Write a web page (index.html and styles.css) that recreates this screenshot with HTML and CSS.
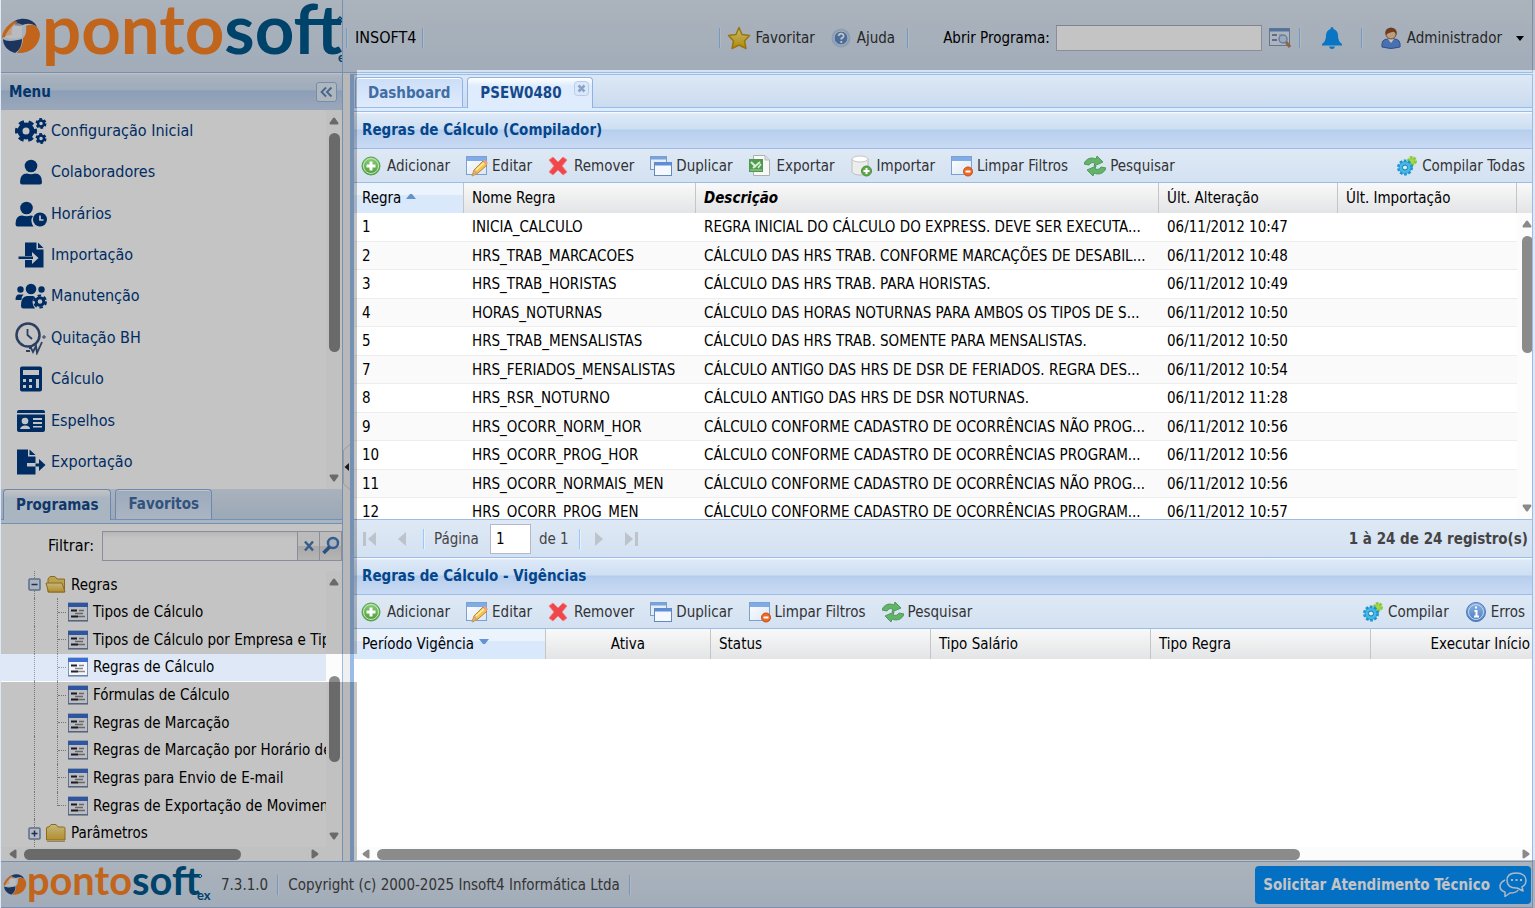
FILE: index.html
```html
<!DOCTYPE html>
<html lang="pt-BR">
<head>
<meta charset="utf-8">
<title>Pontosoft - Regras de Cálculo</title>
<link rel="stylesheet" href="styles.css">
</head>
<body>
<svg class="defs" aria-hidden="true">
  <defs>
    <linearGradient id="gGold" x1="0" y1="0" x2="0" y2="1"><stop offset="0" stop-color="#fff3a0"/><stop offset="1" stop-color="#e9b400"/></linearGradient>
    <linearGradient id="gFolder" x1="0" y1="0" x2="0" y2="1"><stop offset="0" stop-color="#fff0a0"/><stop offset="1" stop-color="#e8b93c"/></linearGradient>
    <linearGradient id="gBlue" x1="0" y1="0" x2="0" y2="1"><stop offset="0" stop-color="#8fb4e4"/><stop offset="1" stop-color="#4a7cc0"/></linearGradient>
    <linearGradient id="gGreen" x1="0" y1="0" x2="0" y2="1"><stop offset="0" stop-color="#8ccf7c"/><stop offset="1" stop-color="#4a9b3a"/></linearGradient>
    <linearGradient id="gPaper" x1="0" y1="0" x2="1" y2="1"><stop offset="0" stop-color="#fff"/><stop offset="1" stop-color="#dbe6f4"/></linearGradient>
    <symbol id="mark" viewBox="0 0 40 38">
      <path d="M9 8C16-1 32 0 36 10C31 6 25 6 20 9Z" fill="#26457a"/>
      <path d="M25 9C33 5 39 11 39 18C38 29 29 37 16 36C21 30 22 26 22 21C24 20 26 15 25 9Z" fill="#fa8424"/>
      <path d="M2 22C5 25 15 24 21 22C21 28 19 33 14 36C7 34 2 29 2 22Z" fill="#26457a"/>
      <path d="M12 5C6 8 1 15 1 21C5 19 8 18 11 18C10 14 10 9 17 5C15 4 14 4 12 5Z" fill="#fa8424"/>
      <path d="M13 7C9 11 5 16 4 20C9 22 16 22 21 20C22 15 20 10 22 8C18 6 15 6 13 7Z" fill="#fff" opacity=".6"/>
    </symbol>
    <symbol id="add" viewBox="0 0 22 22"><circle cx="10" cy="11" r="9" fill="url(#gGreen)" stroke="#57a04a"/><circle cx="10" cy="11" r="7.500" fill="none" stroke="#c5e8bd"/><path d="M10 6.500V15.500M5.500 11H14.500" stroke="#fff" stroke-width="3"/></symbol>
    <symbol id="win" viewBox="0 0 22 22"><rect x=".5" y="1.500" width="20" height="18" fill="url(#gPaper)" stroke="#7ba0d2"/><rect x="1" y="2" width="19" height="4" fill="#7fabe6"/></symbol>
    <symbol id="edit" viewBox="0 0 22 22"><use href="#win"/><path d="M6 21L8 15L17 6L21 10L12 18Z" fill="#f6c455" stroke="#b98222"/><path d="M17 6L19 5L22 8L20.500 10Z" fill="#f0a090"/><path d="M6 21L8 15L12 18Z" fill="#d8a878"/><path d="M10 15L18 8" stroke="#fff0b0" stroke-width="1.500"/></symbol>
    <symbol id="del" viewBox="0 0 22 22"><path d="M5 2L10 7L15 2L19 5L14 11L19 17L15 20L10 15L5 20L1 17L6 11L1 5Z" fill="#f0474a" stroke="#f58084" stroke-linejoin="round"/></symbol>
    <symbol id="dup" viewBox="0 0 22 22"><rect x=".5" y="1.500" width="16" height="13" fill="#e4edf8" stroke="#7b9cc9"/><path d="M1 3H16" stroke="#79a3dc" stroke-width="3"/><rect x="4.500" y="7.500" width="17" height="13" fill="#f5f9fe" stroke="#6589bd"/><path d="M5 9H21" stroke="#5c8fd8" stroke-width="3"/></symbol>
    <symbol id="xls" viewBox="0 0 22 22"><path d="M4.500 .5H16L20.500 5V20.500H4.500Z" fill="#f8f8f8" stroke="#a9b2ac"/><path d="M16 1V5H20" fill="#ddd" stroke="#bbb"/><rect x="0" y="4" width="14" height="13" fill="#4f9a50"/><path d="M2 7L7 12M11 7L4 13" stroke="#d6f0d0" stroke-width="2"/><path d="M9 13L12 9" stroke="#d6f0d0" stroke-width="1.500"/><path d="M1 15H13" stroke="#a7d49f"/></symbol>
    <symbol id="imp" viewBox="0 0 22 22"><path d="M1 4V17C2 21 16 21 17 17V4Z" fill="#ededed" stroke="#bdbdbd"/><ellipse cx="9" cy="4" rx="8" ry="3" fill="#fff" stroke="#c5c5c5"/><circle cx="15.500" cy="16" r="5" fill="#5eaa4b" stroke="#4b8c3b"/><path d="M15.500 13V19M12.500 16H18.500" stroke="#fff" stroke-width="2"/></symbol>
    <symbol id="clr" viewBox="0 0 22 22"><use href="#win"/><circle cx="17" cy="16.500" r="4.500" fill="#ee6a24" stroke="#c84c12"/><path d="M14.500 16.500H19.500" stroke="#fff" stroke-width="2"/></symbol>
    <symbol id="ref" viewBox="0 0 22 22"><path d="M0 9C2 3 8 2 12 4L13 1L19 7L10 11L11 8C8 7 6 8 5 10Z" fill="#63b36a" stroke="#4f9a58" stroke-linejoin="round"/><path d="M22 13C20 19 14 20 10 18L9 21L3 15L12 11L11 14C14 15 16 14 17 12Z" fill="#63b36a" stroke="#4f9a58" stroke-linejoin="round"/></symbol>
    <symbol id="gear2" viewBox="0 0 22 22"><circle cx="16" cy="6" r="3.500" fill="#a2d94e" stroke="#8cc93c" stroke-width="3" stroke-dasharray="2.500 1"/><circle cx="9" cy="12.500" r="6.500" fill="#2aa5de" stroke="#1f93cc" stroke-width="3" stroke-dasharray="2.600 1.500"/><circle cx="9" cy="12.500" r="5.500" fill="#45b8ea"/><circle cx="9" cy="12.500" r="2.500" fill="#d8edf8" stroke="#1678ae"/></symbol>
    <symbol id="info" viewBox="0 0 22 22"><circle cx="11" cy="11" r="9.500" fill="url(#gBlue)" stroke="#4c78b6"/><circle cx="11" cy="11" r="7.500" fill="none" stroke="#c0d6f2"/><path d="M11 5.500V7.500M9.500 10H11.500V15.500M9 15.500H14" stroke="#fff" stroke-width="2" fill="none"/></symbol>
    <symbol id="form" viewBox="0 0 20 20"><rect x=".5" y="1" width="19" height="17.500" fill="#f4f6fa" stroke="#7d94b8"/><rect x="0" y="1" width="20" height="4" fill="#3d6fd0"/><path d="M3 8.500H9M3 14.500H10" stroke="#223" stroke-width="2"/><path d="M11 8.500H16M7 11.500H15M10 14.500H17" stroke="#888" stroke-width="1.500"/><path d="M0 19H20" stroke="#5f7290"/></symbol>
    <symbol id="folder" viewBox="0 0 22 20"><path d="M1.500 17V5Q1.500 4 3 4H4L6 1.500H11L13 4H18.500Q20 4 20 5.500V17Z" fill="url(#gFolder)" stroke="#b98b22"/><path d="M2 18.500H20" stroke="#96783a" opacity=".6"/></symbol>
    <symbol id="folderopen" viewBox="0 0 22 20"><path d="M3 17V4L5 1.500H10L12 4H19.500V17Z" fill="#f3d36e" stroke="#b98b22"/><path d="M1 8H17L20 17H3.500Z" fill="url(#gFolder)" stroke="#b98b22"/></symbol>
    <symbol id="plus" viewBox="0 0 13 13"><rect x="1" y="1" width="11" height="11" rx="1" fill="#eef3fa" stroke="#7790b6" stroke-width="1.500"/><path d="M3.500 6.500H9.500M6.500 3.500V9.500" stroke="#223f70" stroke-width="1.500"/></symbol>
    <symbol id="minus" viewBox="0 0 13 13"><rect x="1" y="1" width="11" height="11" rx="1" fill="#dfe9f5" stroke="#7790b6" stroke-width="1.500"/><path d="M3.500 6.500H9.500" stroke="#223f70" stroke-width="1.500"/></symbol>
    <symbol id="up" viewBox="0 0 10 8"><path d="M4 1Q5 0 6 1L9.500 6Q9.500 7.500 8.500 7.500H1.500Q.5 7.500 .5 6Z" fill="#8a8a8a"/></symbol>
    <symbol id="down" viewBox="0 0 10 8"><path d="M4 7Q5 8 6 7L9.500 2Q9.500 .5 8.500 .5H1.500Q.5 .5 .5 2Z" fill="#8a8a8a"/></symbol>
    <symbol id="left" viewBox="0 0 8 10"><path d="M1 4Q0 5 1 6L6 9.500Q7.500 9.500 7.500 8.500V1.500Q7.500 .5 6 .5Z" fill="#8a8a8a"/></symbol>
    <symbol id="right" viewBox="0 0 8 10"><path d="M7 4Q8 5 7 6L2 9.500Q.5 9.500 .5 8.500V1.500Q.5 .5 2 .5Z" fill="#8a8a8a"/></symbol>
  </defs>
</svg>

<div class="app">
  <header class="top">
    <div class="brand">
      <svg class="brand-logo" viewBox="0 0 341 71" role="img" aria-label="pontosoft">
        <use href="#mark" x="0" y="17" width="40" height="38"/>
        <text x="41" y="54" class="logo-text"><tspan class="logo-a">ponto</tspan><tspan class="logo-b">soft</tspan></text>
        <path d="M339 17L342 20L339 23L336 20Z" fill="none" stroke="#00588b" stroke-width="1.500"/>
        <text x="337" y="62" class="logo-ex">ex</text>
      </svg>
    </div>
    <div class="topbar">
      <i class="sep"></i><span class="company">INSOFT4</span><i class="sep"></i>
      <div class="topright">
        <i class="sep"></i>
        <button class="tbtn fav"><svg width="24" height="24" viewBox="0 0 24 24"><path d="M12 1.500L15 8.500L22.500 9.500L17.500 15L19 22.500L12 19L5 22.500L6.500 15L1.500 9.500L9 8.500Z" fill="url(#gGold)" stroke="#c69a10" stroke-width="1.500" stroke-linejoin="round"/></svg>Favoritar</button>
        <button class="tbtn help"><svg width="20" height="20" viewBox="0 0 20 20"><circle cx="10" cy="10" r="9.500" fill="#b8cdea"/><circle cx="10" cy="10" r="7" fill="#6090cc" stroke="#e3edf9"/><path d="M7.500 8Q8 5.500 10.300 5.600Q13 6 12.500 8.300Q12 9.500 10.300 10.500V11.500M10.300 13V15" fill="none" stroke="#fff" stroke-width="1.800"/></svg>Ajuda</button>
        <i class="sep"></i>
        <label class="open-label" for="prog">Abrir Programa:</label>
        <input class="open-input" id="prog" type="text">
        <button class="tbtn find" aria-label="Buscar programa"><svg width="22" height="22" viewBox="0 0 22 22"><rect x=".5" y="1.500" width="20" height="17" fill="#e3ebf5" stroke="#8099bd"/><path d="M1 3H20" stroke="#6f95cc" stroke-width="3"/><path d="M3 8H8M3 13H8" stroke="#6f8fbd" stroke-width="2"/><path d="M10 8H13M10 13H12" stroke="#8fa3c0"/><circle cx="14" cy="12" r="4" fill="#c9dcf4" stroke="#8aa5ca" stroke-width="1.500"/><path d="M17 15L21 20" stroke="#b98556" stroke-width="3"/></svg></button>
        <i class="sep"></i>
        <button class="tbtn bell" aria-label="Notificações"><svg width="22" height="22" viewBox="0 0 22 22"><path d="M11 0Q12.500 0 12.500 2Q17 3.500 17 9Q17 14 21 17V18.500H1V17Q5 14 5 9Q5 3.500 9.500 2Q9.500 0 11 0ZM8 19.500H14Q13.500 22 11 22Q8.500 22 8 19.500Z" fill="#0c99ff"/></svg></button>
        <i class="sep"></i>
        <button class="tbtn user"><svg width="20" height="22" viewBox="0 0 20 22"><path d="M1 20Q0 12 7 12H13Q20 12 19 20Q10 23 1 20Z" fill="#5f94e6" stroke="#3a68b8"/><path d="M7 12L10 16L13 12Z" fill="#fff"/><circle cx="10" cy="7" r="5" fill="#f5cba4" stroke="#a06a40"/><path d="M4.500 8Q3 1 10 .5Q17 1 15.500 8Q14 4 11 5Q7 6 4.500 8Z" fill="#8f5028"/></svg>Administrador<span class="caret"></span></button>
      </div>
    </div>
  </header>

  <div class="middle">
    <aside class="side">
      <div class="phead"><h2>Menu</h2><button class="collapse" aria-label="Recolher menu"><svg width="20" height="20" viewBox="0 0 20 20"><path d="M9.500 5L4.500 10L9.500 15M15.500 5L10.500 10L15.500 15" fill="none" stroke="#5d83b5" stroke-width="2"/></svg></button></div>
      <div class="menu">
        <nav class="menu-list">
          <a href="#"><svg viewBox="0 0 32 26"><g fill="none" stroke="#003a82"><circle cx="11" cy="13" r="6" stroke-width="5"/><circle cx="11" cy="13" r="9" stroke-width="4" stroke-dasharray="5 4.425" stroke-dashoffset="2.500"/><circle cx="26" cy="5.500" r="3" stroke-width="2.500"/><circle cx="26" cy="5.500" r="4.500" stroke-width="2" stroke-dasharray="2.700 2.012"/><circle cx="26" cy="20.500" r="3" stroke-width="2.500"/><circle cx="26" cy="20.500" r="4.500" stroke-width="2" stroke-dasharray="2.700 2.012"/></g></svg>Configuração Inicial</a>
          <a href="#"><svg viewBox="0 0 32 26"><circle cx="16" cy="7" r="6.300"/><path d="M5 23Q5 14.500 12 14.500Q16 16 20 14.500Q27 14.500 27 23Q27 25.500 25 25.500H7Q5 25.500 5 23Z"/></svg>Colaboradores</a>
          <a href="#"><svg viewBox="0 0 32 26"><circle cx="11.500" cy="7" r="6.300"/><path d="M.5 23Q.5 14.500 7 14.500Q11.500 16 16 14.500L18 15Q14.500 20 18.500 25.500H2.500Q.5 25.500 .5 23Z"/><circle cx="25" cy="18.500" r="7"/><path d="M25 14.500V19H28.500" fill="none" stroke="#fff" stroke-width="1.700"/></svg>Horários</a>
          <a href="#"><svg viewBox="0 0 32 26"><path d="M10 .5H21.500V7.500H28.500V25.500H10V18H17V22L23.500 16L17 10V14H10ZM23 .5L28.500 6H23Z"/><path d="M3.500 14.500H18V17H3.500Z"/></svg>Importação</a>
          <a href="#"><svg viewBox="0 0 32 26"><circle cx="5.500" cy="6.500" r="3.200"/><circle cx="16" cy="6" r="5.300"/><circle cx="26.500" cy="6.500" r="3.200"/><path d="M.5 17Q.5 11.500 4 11.500H8.500Q6 14 6.500 17ZM6 23Q6 13 12 13H18L20 14Q15 19 20 25.500H8Q6 25 6 23Z"/><g fill="none" stroke="#003a82"><circle cx="25" cy="18.500" r="3.800" stroke-width="3"/><circle cx="25" cy="18.500" r="6" stroke-width="2" stroke-dasharray="3.500 2.783"/></g></svg>Manutenção</a>
          <a href="#"><svg class="clock" viewBox="0 0 32 34"><g fill="none" stroke="#3a527f"><circle cx="13" cy="14" r="11.500" stroke-width="2.500"/><path d="M12.500 8V14L17 18" stroke-width="1.800"/><path d="M29 14V18M27 16H31" stroke-width="1"/><path d="M11 30H15M14 27H17M16 27L18 31L21 25L22 32L27 21" stroke-width="1.800"/></g></svg>Quitação BH</a>
          <a href="#"><svg viewBox="0 0 32 26"><path fill-rule="evenodd" d="M7 .5H25Q27 .5 27 2.500V23.500Q27 25.500 25 25.500H7Q5 25.500 5 23.500V2.500Q5 .5 7 .5ZM8 4V9H24V4ZM8 13V16H11V13ZM14 13V16H17V13ZM8 19V22H11V19ZM14 19V22H17V19ZM21 13V22H24V13Z"/></svg>Cálculo</a>
          <a href="#"><svg viewBox="0 0 32 26"><path d="M4 2H28Q30 2 30 4V5H2V4Q2 2 4 2ZM2 6.500H30V22Q30 24 28 24H4Q2 24 2 22Z"/><circle cx="10" cy="13" r="3.300" fill="#fff"/><path d="M5 21Q6 17.500 10 17.500Q15 17.500 15 21ZM18 10H27V12H18ZM18 14H27V16H18ZM18 18H27V19.500H18Z" fill="#fff"/></svg>Espelhos</a>
          <a href="#"><svg viewBox="0 0 32 26"><path d="M2 .5H13V7.500H20.500V14H12V17.500H20.500V25.500H2ZM14.500 .5L20.500 6H14.500Z"/><path d="M20.500 14.500H24V10L30.500 16L24 22V17.500H20.500Z"/></svg>Exportação</a>
        </nav>
        <div class="vscroll"><svg width="10" height="8"><use href="#up"/></svg><div class="thumb thumb-menu"></div><svg class="end" width="10" height="8"><use href="#down"/></svg></div>
      </div>
      <div class="tabs side-tabs"><button class="tab active">Programas</button><button class="tab">Favoritos</button></div>
      <div class="tabline"></div>
      <form class="filter">
        <label for="filtro">Filtrar:</label><input id="filtro" type="text"><button type="button" aria-label="Limpar"><svg width="12" height="12" viewBox="0 0 12 12"><path d="M2 1.500L10 10.500M10 1.500L2 10.500" stroke="#4a7ab5" stroke-width="2.500"/></svg></button><button type="button" aria-label="Procurar"><svg width="20" height="20" viewBox="0 0 20 20"><circle cx="12" cy="7" r="5" fill="#dce9f8" stroke="#4478bd" stroke-width="2.500"/><path d="M8.500 11L2.500 17" stroke="#3867a6" stroke-width="3.500"/></svg></button>
      </form>
      <div class="tree">
        <ul class="tree-list">
          <li class="node"><i class="root"></i><svg class="tog" width="13" height="13"><use href="#minus"/></svg><svg class="fold" width="22" height="20"><use href="#folderopen"/></svg>Regras</li>
          <li class="leaf"><i class="g1"></i><i class="g2"></i><svg><use href="#form"/></svg>Tipos de Cálculo</li>
          <li class="leaf"><i class="g1"></i><i class="g2"></i><svg><use href="#form"/></svg>Tipos de Cálculo por Empresa e Tipo</li>
          <li class="leaf selected"><i class="g1"></i><i class="g2"></i><svg><use href="#form"/></svg>Regras de Cálculo</li>
          <li class="leaf"><i class="g1"></i><i class="g2"></i><svg><use href="#form"/></svg>Fórmulas de Cálculo</li>
          <li class="leaf"><i class="g1"></i><i class="g2"></i><svg><use href="#form"/></svg>Regras de Marcação</li>
          <li class="leaf"><i class="g1"></i><i class="g2"></i><svg><use href="#form"/></svg>Regras de Marcação por Horário de</li>
          <li class="leaf"><i class="g1"></i><i class="g2"></i><svg><use href="#form"/></svg>Regras para Envio de E-mail</li>
          <li class="leaf last"><i class="g1"></i><i class="g2"></i><svg><use href="#form"/></svg>Regras de Exportação de Movimentos</li>
          <li class="node"><i class="root"></i><svg class="tog" width="13" height="13"><use href="#plus"/></svg><svg class="fold" width="22" height="20"><use href="#folder"/></svg>Parâmetros</li>
        </ul>
        <div class="vscroll"><svg width="10" height="8"><use href="#up"/></svg><i class="space-a"></i><div class="thumb thumb-tree"></div><i class="space-b"></i><svg width="10" height="8"><use href="#down"/></svg></div>
      </div>
      <div class="hscroll tree-h"><svg width="8" height="10"><use href="#left"/></svg><div class="thumb"></div><svg class="end" width="8" height="10"><use href="#right"/></svg></div>
    </aside>
    <div class="splitter"><button aria-label="Recolher"><svg width="7" height="46" viewBox="0 0 7 46"><path d="M7 .5L.5 6V40L7 45.500" fill="#eee" stroke="#ccc"/><path d="M6 19L1.500 23L6 27Z" fill="#222"/></svg></button></div>

    <main class="main">
      <div class="tabs main-tabs"><button class="tab">Dashboard</button><button class="tab active closable">PSEW0480<svg width="15" height="15" viewBox="0 0 15 15"><rect x=".5" y=".5" width="14" height="14" rx="3" fill="#dbe8f8" stroke="#b5cdeb"/><path d="M4.500 4.500L10.500 10.500M10.500 4.500L4.500 10.500" stroke="#88a4cb" stroke-width="2.500"/></svg></button></div>
      <div class="tabline"></div>
      <section class="panel rules">
        <div class="phead"><h2>Regras de Cálculo (Compilador)</h2></div>
        <div class="toolbar">
          <button><svg><use href="#add"/></svg>Adicionar</button><button><svg><use href="#edit"/></svg>Editar</button><button><svg><use href="#del"/></svg>Remover</button><button><svg><use href="#dup"/></svg>Duplicar</button><button class="wide"><svg><use href="#xls"/></svg>Exportar</button><button><svg><use href="#imp"/></svg>Importar</button><button><svg><use href="#clr"/></svg>Limpar Filtros</button><button><svg><use href="#ref"/></svg>Pesquisar</button><button class="push"><svg><use href="#gear2"/></svg>Compilar Todas</button>
        </div>
        <div class="gridwrap">
          <div class="tablebox">
          <table class="grid">
            <colgroup><col class="c109"><col class="c232"><col><col class="c179"><col class="c179"></colgroup>
            <thead><tr><th class="sorted">Regra<svg width="10" height="6" viewBox="0 0 10 6"><path d="M0 6L4 1H6L10 6Z" fill="#6593cf"/></svg></th><th>Nome Regra</th><th class="changed">Descrição</th><th>Últ. Alteração</th><th>Últ. Importação</th></tr></thead>
            <tbody>
              <tr><td>1</td><td>INICIA_CALCULO</td><td>REGRA INICIAL DO CÁLCULO DO EXPRESS. DEVE SER EXECUTA...</td><td>06/11/2012 10:47</td><td></td></tr>
              <tr><td>2</td><td>HRS_TRAB_MARCACOES</td><td>CÁLCULO DAS HRS TRAB. CONFORME MARCAÇÕES DE DESABIL...</td><td>06/11/2012 10:48</td><td></td></tr>
              <tr><td>3</td><td>HRS_TRAB_HORISTAS</td><td>CÁLCULO DAS HRS TRAB. PARA HORISTAS.</td><td>06/11/2012 10:49</td><td></td></tr>
              <tr><td>4</td><td>HORAS_NOTURNAS</td><td>CÁLCULO DAS HORAS NOTURNAS PARA AMBOS OS TIPOS DE S...</td><td>06/11/2012 10:50</td><td></td></tr>
              <tr><td>5</td><td>HRS_TRAB_MENSALISTAS</td><td>CÁLCULO DAS HRS TRAB. SOMENTE PARA MENSALISTAS.</td><td>06/11/2012 10:50</td><td></td></tr>
              <tr><td>7</td><td>HRS_FERIADOS_MENSALISTAS</td><td>CÁLCULO ANTIGO DAS HRS DE DSR DE FERIADOS. REGRA DES...</td><td>06/11/2012 10:54</td><td></td></tr>
              <tr><td>8</td><td>HRS_RSR_NOTURNO</td><td>CÁLCULO ANTIGO DAS HRS DE DSR NOTURNAS.</td><td>06/11/2012 11:28</td><td></td></tr>
              <tr><td>9</td><td>HRS_OCORR_NORM_HOR</td><td>CÁLCULO CONFORME CADASTRO DE OCORRÊNCIAS NÃO PROG...</td><td>06/11/2012 10:56</td><td></td></tr>
              <tr><td>10</td><td>HRS_OCORR_PROG_HOR</td><td>CÁLCULO CONFORME CADASTRO DE OCORRÊNCIAS PROGRAM...</td><td>06/11/2012 10:56</td><td></td></tr>
              <tr><td>11</td><td>HRS_OCORR_NORMAIS_MEN</td><td>CÁLCULO CONFORME CADASTRO DE OCORRÊNCIAS NÃO PROG...</td><td>06/11/2012 10:56</td><td></td></tr>
              <tr><td>12</td><td>HRS_OCORR_PROG_MEN</td><td>CÁLCULO CONFORME CADASTRO DE OCORRÊNCIAS PROGRAM...</td><td>06/11/2012 10:57</td><td></td></tr>
            </tbody>
          </table>
          </div>
          <div class="gutter"><div class="gutter-head"></div><div class="vscroll"><svg width="10" height="8"><use href="#up"/></svg><div class="thumb thumb-rules"></div><svg class="end" width="10" height="8"><use href="#down"/></svg></div></div>
        </div>
        <div class="pager">
          <button aria-label="Primeira"><svg width="14" height="16" viewBox="0 0 14 16"><path d="M1.500 1V15" stroke="#bcc3cb" stroke-width="3"/><path d="M13 1V15L5 8Z" fill="#bcc3cb"/></svg></button>
          <button aria-label="Anterior"><svg width="14" height="16" viewBox="0 0 14 16"><path d="M11 1V15L3 8Z" fill="#bcc3cb"/></svg></button>
          <i class="sep"></i><label for="pg">Página</label><input id="pg" type="text" value="1"><span>de 1</span><i class="sep"></i>
          <button aria-label="Próxima"><svg width="14" height="16" viewBox="0 0 14 16"><path d="M3 1V15L11 8Z" fill="#bcc3cb"/></svg></button>
          <button aria-label="Última"><svg width="14" height="16" viewBox="0 0 14 16"><path d="M12.500 1V15" stroke="#bcc3cb" stroke-width="3"/><path d="M1 1V15L9 8Z" fill="#bcc3cb"/></svg></button>
          <b class="push">1 à 24 de 24 registro(s)</b>
        </div>
      </section>
      <section class="panel terms">
        <div class="phead"><h2>Regras de Cálculo - Vigências</h2></div>
        <div class="toolbar">
          <button><svg><use href="#add"/></svg>Adicionar</button><button><svg><use href="#edit"/></svg>Editar</button><button><svg><use href="#del"/></svg>Remover</button><button><svg><use href="#dup"/></svg>Duplicar</button><button><svg><use href="#clr"/></svg>Limpar Filtros</button><button><svg><use href="#ref"/></svg>Pesquisar</button><button class="push"><svg><use href="#gear2"/></svg>Compilar</button><button><svg><use href="#info"/></svg>Erros</button>
        </div>
        <div class="tablebox">
          <table class="grid">
            <colgroup><col class="c191"><col class="c165"><col class="c220"><col class="c220"><col class="c220"><col></colgroup>
            <thead><tr><th class="sorted">Período Vigência<svg width="10" height="6" viewBox="0 0 10 6"><path d="M0 0L4 5H6L10 0Z" fill="#6593cf"/></svg></th><th class="center">Ativa</th><th>Status</th><th>Tipo Salário</th><th>Tipo Regra</th><th class="right">Executar Início</th></tr></thead>
          </table>
        </div>
        <div class="hscroll terms-h"><svg width="8" height="10"><use href="#left"/></svg><div class="thumb"></div><svg class="end" width="8" height="10"><use href="#right"/></svg></div>
      </section>
    </main>
  </div>

  <footer class="foot">
    <svg class="foot-logo" viewBox="0 0 212 45" role="img" aria-label="pontosoft ex">
      <use href="#mark" x="2" y="11" width="24" height="23"/>
      <text x="26" y="33" class="logo-text small"><tspan class="logo-a">ponto</tspan><tspan class="logo-b">soft</tspan></text>
      <path d="M200 12L202 14L200 16L198 14Z" fill="none" stroke="#00588b"/>
      <text x="197" y="38" class="logo-ex">ex</text>
    </svg>
    <span class="version">7.3.1.0</span><i class="sep"></i><span>Copyright (c) 2000-2025 Insoft4 Informática Ltda</span><i class="sep"></i>
    <button class="support">Solicitar Atendimento Técnico<svg width="28" height="26" viewBox="0 0 28 26"><g fill="none" stroke="#e6f2ff" stroke-width="1.500" stroke-linejoin="round"><path d="M17 1C24 1 27 4.500 27 8.500C27 12 25 14 23 15L24 19L18 16C11 16.500 8 13 8 8.500C8 4 11 1 17 1Z"/><path d="M6 8C2 10 1 12 1 14.500C1 17 3 19 6 20V24.500L11 21C15 21 18 20 19 18"/></g><path d="M12 8H14M16.500 8H18.500M21 8H23" stroke="#e6f2ff" stroke-width="1.800"/></svg></button>
  </footer>
  <div class="shade" aria-hidden="true"><i class="shade-top"></i><i class="shade-menu"></i><i class="shade-tree"></i><i class="shade-foot"></i></div>
</div>
</body>
</html>
```

FILE: styles.css
```css
* { box-sizing: border-box; }
body { margin: 0; background: #dfe8f6; color: #000; font: 15px/20px "DejaVu Sans Condensed", "DejaVu Sans", "Noto Sans", sans-serif; }
button, input { font: inherit; color: inherit; }
button { border: 0; padding: 0; background: none; }
svg { display: block; flex: none; }
h2 { margin: 0; font-size: 15px; line-height: 20px; color: #04468c; }
.defs { position: absolute; width: 0; height: 0; }
.app { position: relative; display: flex; flex-direction: column; height: 100vh; padding: 0 2px 0 1px; overflow: hidden; }
.sep { flex: none; width: 2px; height: 20px; border-left: 1px solid #98c8ff; border-right: 1px solid #e8f0fa; }
.push { margin-left: auto; }

/* top bar */
.top { display: flex; flex: none; height: 73px; background: linear-gradient(#dfe9f5, #d3e1f1); border-bottom: 1px solid #99bce8; border-right: 1px solid #99bce8; }
.brand { flex: none; width: 342px; border-right: 1px solid #99bce8; overflow: hidden; }
.brand-logo { width: 341px; height: 71px; }
.logo-text { font: 700 69px Lato, sans-serif; }
.logo-text.small { font-size: 40px; }
.logo-a { fill: #fa8424; }
.logo-b { fill: #00588b; }
.logo-ex { font: 700 13px Lato, sans-serif; fill: #00588b; }
.topbar { display: flex; flex: 1; align-items: center; padding: 4px 8px 0 3px; }
.company { margin: 0 6px 0 7px; font-size: 16px; }
.topright { display: flex; align-items: center; margin-left: auto; }
.tbtn { display: flex; align-items: center; gap: 6px; color: #333; }
.fav { gap: 4px; margin: 0 16px 0 6px; }
.help { margin-right: 12px; }
.open-label { margin: 0 6px 0 34px; }
.open-input { width: 206px; height: 26px; border: 1px solid #b5b8c8; border-top-color: #aaa8bb; background: #fff; padding: 0 4px; }
.find { margin: 0 8px 0 7px; }
.bell { margin: 0 18px 0 20px; }
.user { margin-left: 18px; }
.caret { margin-left: 8px; border: 4px solid transparent; border-top: 5px solid #000; border-bottom: 0; }

.middle { display: flex; flex: 1; min-height: 0; }
.phead { display: flex; flex: none; align-items: center; justify-content: space-between; height: 37px; padding: 0 6px 0 8px; border-bottom: 1px solid #99bce8; background: linear-gradient(#fff 0, #dde9f7 2px, #cedff3 17px, #b4cdee 18px, #b9d0ee 20px, #c9daf3 36px); }

/* left column */
.side { display: flex; flex: none; flex-direction: column; width: 342px; background: #fff; border-right: 1px solid #99bce8; }
.side > .phead { border-bottom: 0; padding-right: 5px; }
.collapse { border: 1px solid #99b8dd; border-radius: 3px; background: #e3edf8; }
.collapse svg { width: 19px; height: 18px; }
.menu { display: flex; flex: 377 1 0; min-height: 0; }
.menu-list { display: flex; flex: 1; flex-direction: column; padding: 0 0 6px 14px; }
.menu-list a { display: flex; flex: 1; align-items: center; gap: 4px; color: #003a82; font-size: 16px; text-decoration: none; }
.menu-list svg { width: 32px; height: 26px; fill: #003a82; }
.menu-list .clock { height: 34px; }
.vscroll { display: flex; flex: none; flex-direction: column; align-items: center; width: 16px; padding: 7px 0; background: #fcfcfc; }
.thumb { flex: none; border-radius: 6px; background: #8b8b8b; }
.vscroll .thumb { width: 11px; }
.end { margin-top: auto; }
.thumb-menu { height: 60%; margin-top: 8px; }
.thumb-tree { height: 33%; }
.thumb-rules { height: 40%; margin-top: 8px; }
.space-a { flex: 90; }
.space-b { flex: 70; }
.tabs { display: flex; flex: none; align-items: flex-end; gap: 4px; background: linear-gradient(#dde8f5, #cbdbef); border-bottom: 1px solid #99bce8; }
.tab { height: 30px; padding: 0 12px; border: 1px solid #8db2e3; border-bottom: 0; border-radius: 4px 4px 0 0; background: linear-gradient(#cbdef7, #dfebfc); box-shadow: inset 0 1px #fff; color: #416da3; font-weight: 700; }
.tab.active { margin-bottom: -1px; height: 31px; background: linear-gradient(#fff, #deecfd 8px); color: #15498b; }
.side-tabs { height: 31px; padding-left: 2px; }
.tabline { flex: none; height: 4px; background: #deecfd; border-bottom: 1px solid #99bce8; }
.filter { display: flex; flex: none; align-items: center; padding: 7px 0 10px 47px; }
.filter label { margin-right: 8px; font-size: 16px; }
.filter input { flex: 1; min-width: 0; height: 30px; border: 1px solid #b5b8c8; background: linear-gradient(#eee, #fff 6px); padding: 0 4px; }
.filter button { display: flex; align-items: center; justify-content: center; width: 22px; height: 30px; border: 1px solid #b5b8c8; border-left: 0; background: linear-gradient(#f4f4f4 50%, #dcdcdc 50%, #ececec); }
.tree { display: flex; flex: 275 1 0; min-height: 0; }
.tree-list { display: flex; flex: 1; flex-direction: column; min-width: 0; margin: 0; padding: 0; list-style: none; overflow: hidden; }
.node, .leaf { position: relative; display: flex; flex: 1; align-items: center; white-space: nowrap; overflow: hidden; }
.node { padding-left: 27px; }
.node .root { position: absolute; left: 33px; top: 0; bottom: 0; border-left: 1px dotted #999; }
.tog { position: relative; margin-right: 4px; }
.fold { margin-right: 4px; }
.leaf { padding-left: 33px; }
.leaf svg { width: 20px; height: 20px; margin-right: 5px; }
.selected { background: #dfe8f6; }
.g1, .g2 { flex: none; align-self: stretch; border-left: 1px dotted #999; }
.g1 { width: 23px; }
.g2 { display: flex; align-items: center; width: 11px; }
.g2::after { content: ""; width: 8px; border-top: 1px dotted #999; }
.last .g2 { align-self: flex-start; align-items: flex-end; height: 14px; }
.hscroll { display: flex; flex: none; align-items: center; height: 14px; background: #fcfcfc; padding: 0 8px; }
.hscroll .thumb { height: 11px; margin-left: 7px; }
.hscroll .end { margin: 0 0 0 auto; }
.tree-h { padding-right: 23px; }
.tree-h .thumb { width: 70%; }
.terms-h { padding-right: 2px; }
.terms-h .thumb { width: 79%; }
.splitter { display: flex; flex: none; align-items: center; width: 7px; background: #f0f0f0; }

/* work area */
.main { display: flex; flex: 1; flex-direction: column; min-width: 0; margin-top: 1px; border: 1px solid #99bce8; border-left-width: 4px; border-bottom: 0; }
.main-tabs { height: 33px; padding-left: 1px; }
.closable { display: flex; align-items: center; padding-right: 3px; }
.closable svg { align-self: flex-start; margin: 3px 0 0 12px; }
.panel { display: flex; flex-direction: column; min-height: 0; background: #fff; }
.rules { flex: 446 1 0; }
.terms { flex: 303 1 0; }
.toolbar { display: flex; flex: none; align-items: center; gap: 16px; height: 34px; padding: 0 7px; background: linear-gradient(#dfe9f5, #d3e1f1); border-bottom: 1px solid #99bce8; color: #333; }
.toolbar button { display: flex; align-items: center; gap: 4px; white-space: nowrap; }
.toolbar .wide { gap: 6px; }
.toolbar svg { width: 22px; height: 22px; }
.gridwrap { display: flex; flex: 1; min-height: 0; }
.tablebox { flex: 1; min-width: 0; overflow: hidden; }
.grid { width: 100%; table-layout: fixed; border-collapse: separate; border-spacing: 0; }
.c109 { width: 110px; }
.c232 { width: 232px; }
.c179 { width: 179px; }
.c191 { width: 192px; }
.c165 { width: 165px; }
.c220 { width: 220px; }
.grid th { height: 30px; padding: 0 8px; border-right: 1px solid #c5c5c5; background: linear-gradient(#f9f9f9, #e3e4e6); font-weight: 400; text-align: left; white-space: nowrap; }
.grid th.sorted { background: linear-gradient(#ebf3fd 40%, #d9e8fb 40%); }
.grid th svg { display: inline-block; margin: 0 0 4px 5px; }
.grid th.changed { font-weight: 700; font-style: italic; }
.grid th.center { text-align: center; }
.grid th.right { padding-right: 2px; border-right: 0; text-align: right; }
.grid td { height: 28px; padding: 0 8px; border-bottom: 1px solid #ededed; overflow: hidden; text-overflow: ellipsis; white-space: nowrap; }
.grid tr:nth-child(odd) td { height: 29px; }
.grid tr:nth-child(even) td { background: #fafafa; }
.gutter { display: flex; flex: none; flex-direction: column; width: 15px; overflow: hidden; }
.gutter-head { flex: none; height: 30px; background: linear-gradient(#f9f9f9, #e3e4e6); }
.gutter .vscroll { flex: 1; width: 20px; }
.pager { display: flex; flex: none; align-items: center; height: 39px; padding: 0 4px 0 9px; background: linear-gradient(#dfe9f5, #d3e1f1); border: 1px solid #99bce8; border-width: 1px 0; color: #444; }
.pager button { margin-right: 18px; }
.pager .sep { margin-left: -4px; }
.pager label { margin: 0 11px 0 9px; }
.pager input { width: 41px; height: 30px; margin-right: 8px; padding: 0 5px; border: 1px solid #b5b8c8; background: #fff; color: #000; }
.pager span { margin-right: 14px; }
.pager .sep + button { margin-left: 11px; }

/* footer */
.foot { display: flex; flex: none; align-items: center; gap: 9px; height: 47px; padding-right: 1px; background: linear-gradient(#dfe9f5, #d3e1f1); border: 1px solid #99bce8; border-left: 0; color: #444; }
.foot-logo { width: 211px; height: 45px; }
.support { display: flex; align-items: center; gap: 9px; height: 38px; margin-left: auto; padding: 0 4px 0 8px; border-radius: 4px; background: #0492ff; color: #fff; font-weight: 700; }

/* tour backdrop, open over the highlighted row and the work area */
.shade { position: absolute; inset: 0 0 0 1px; display: grid; grid-template: 70px 584px 28px 1fr 48px / 356px 1fr; pointer-events: none; }
.shade i { background: rgba(0, 0, 0, .23); }
.shade-top { grid-area: 1 / 1 / 2 / 3; }
.shade-menu { grid-area: 2 / 1; }
.shade-tree { grid-area: 4 / 1; }
.shade-foot { grid-area: 5 / 1 / 6 / 3; }
```
